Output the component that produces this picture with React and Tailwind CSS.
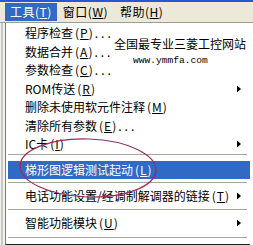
import React from 'react';

const font = { fontFamily: '"Noto Sans CJK SC", "Liberation Sans", sans-serif' };

function Arrow() {
  return (
    <svg width="4" height="7" viewBox="0 0 4 7" className="absolute right-[9px] top-1/2 -translate-y-1/2">
      <path d="M0 0 L4 3.5 L0 7 Z" fill="#000" />
    </svg>
  );
}

function Item({ label, keyChar, dots, sub, active, className = '' }) {
  return (
    <div
      className={`relative flex items-center pl-[17px] text-[12px] leading-none whitespace-nowrap ${
        active ? 'bg-[#316ac5] text-white' : 'text-black'
      } ${className}`}
    >
      <span>{label}</span>
      <span className="ml-[2px] tracking-[1px]">
        (<span className="underline underline-offset-1">{keyChar}</span>)
      </span>
      {dots && <span className="tracking-[3px] ml-[1px]">...</span>}
      {sub && <Arrow />}
    </div>
  );
}

function Sep() {
  return <div className="h-px bg-[#a7a69c] mr-[3px]" />;
}

export default function App() {
  return (
    <div className="relative w-[253px] h-[245px] overflow-hidden bg-white" style={font}>
      {/* menu bar */}
      <div className="h-[2px] bg-[#2458d4]" />
      <div className="h-[20px] bg-[#ece9d8] flex items-center text-[12px] text-black">
        <div className="ml-[5px] h-[18px] px-[5px] flex items-center bg-[#316ac5] text-white tracking-[0.5px]">
          工具(<span className="underline">T</span>)
        </div>
        <div className="ml-[5px] px-[1px] tracking-[0.5px]">
          窗口(<span className="underline">W</span>)
        </div>
        <div className="ml-[11px] tracking-[0.5px]">
          帮助(<span className="underline">H</span>)
        </div>
      </div>
      <div className="h-px bg-[#9d9d97]" />

      <div className="flex h-[222px]">
        {/* background window strip */}
        <div className="w-[5px] bg-[#f1f1ee] flex">
          <div className="w-[2px] ml-[1px] bg-[#c9c9c4]" />
        </div>
        {/* dropdown menu */}
        <div className="flex-1 mr-[3px] border-l border-[#7a7a76] border-b border-b-[#222] pl-[2px] flex flex-col">
          <div className="h-px" />
          <Item label="程序检查" keyChar="P" dots className="h-[18.5px]" />
          <Item label="数据合并" keyChar="A" dots className="h-[18.5px]" />
          <Item label="参数检查" keyChar="C" dots className="h-[18.5px]" />
          <Item label="ROM传送" keyChar="R" sub className="h-[18.5px]" />
          <Item label="删除未使用软元件注释" keyChar="M" className="h-[18.5px]" />
          <Item label="清除所有参数" keyChar="E" dots className="h-[18.5px]" />
          <Item label="IC卡" keyChar="I" sub className="h-[18.5px]" />
          <Sep />
          <div className="h-[6px]" />
          <Item label="梯形图逻辑测试起动" keyChar="L" active className="h-[18px]" />
          <div className="h-[3px]" />
          <Sep />
          <Item label="电话功能设置/经调制解调器的链接" keyChar="T" sub className="h-[26px]" />
          <Sep />
          <Item label="智能功能模块" keyChar="U" sub className="h-[27px]" />
          <Sep />
          <div className="flex-1" />
        </div>
      </div>

      {/* watermark */}
      <div className="absolute left-[114px] top-[38px] text-[12px] leading-none text-black whitespace-nowrap">
        全国最专业三菱工控网站
      </div>
      <div
        className="absolute left-[133px] top-[56px] text-[9.6px] leading-none text-black whitespace-nowrap"
        style={{ fontFamily: '"Liberation Mono", monospace' }}
      >
        www.ymmfa.com
      </div>

      {/* hand-drawn circle */}
      <svg className="absolute left-0 top-0 pointer-events-none" width="253" height="245" viewBox="0 0 253 245">
        <ellipse cx="88" cy="168" rx="68" ry="29" fill="none" stroke="#9c2a58" strokeWidth="1.2" transform="rotate(2 88 168)" />
      </svg>
    </div>
  );
}
